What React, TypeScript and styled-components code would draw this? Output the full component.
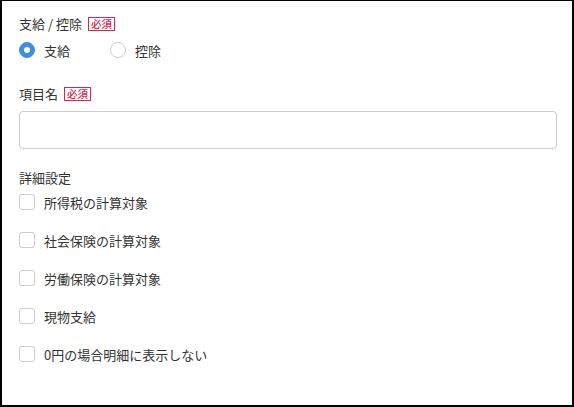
import styled, {createGlobalStyle} from "styled-components";

const GlobalStyle = createGlobalStyle`
  html, body {
    margin: 0;
    padding: 0;
    background: #ffffff;
  }

  body {
    font-family: "Noto Sans CJK JP", "Noto Sans", sans-serif;
    color: #333333;
  }
`;

const Panel = styled.div`
  background: #ffffff;
  border: solid 1px #000000;
  border-bottom-width: 2px;
  border-left-width: 2px;
  border-right-width: 2px;
  box-sizing: border-box;
  display: flex;
  flex-direction: column;
  height: 407px;
  padding: 13px 16px 0 17px;
  width: 574px;
`;

const Field = styled.div<{ $gap: number; $inner: number; }>`
  display: flex;
  flex-direction: column;
  gap: ${props => props.$inner}px;
  margin-bottom: ${props => props.$gap}px;
`;

const Label = styled.div`
  align-items: center;
  display: flex;
  font-size: 13px;
  gap: 6px;
  height: 20px;
  line-height: 20px;
`;

const Required = styled.span`
  border: solid 1px #e0234e;
  box-sizing: border-box;
  color: #e0234e;
  font-size: 10.5px;
  font-weight: 500;
  height: 14px;
  line-height: 12px;
  padding: 0 2px;
`;

const RadioRow = styled.div`
  align-items: center;
  display: flex;
  gap: 40px;
  height: 20px;
`;

const Option = styled.label`
  align-items: center;
  display: flex;
  font-size: 13px;
  gap: 9px;
`;

const Radio = styled.span<{ $checked?: boolean; }>`
  background: ${props => props.$checked ? "#3b8fde" : "#ffffff"};
  border: solid 1px ${props => props.$checked ? "#3b8fde" : "#cccccc"};
  border-radius: 50%;
  box-sizing: border-box;
  display: inline-flex;
  align-items: center;
  justify-content: center;
  height: 16px;
  width: 16px;

  &::after {
    background: #ffffff;
    border-radius: 50%;
    content: "";
    display: ${props => props.$checked ? "block" : "none"};
    height: 6px;
    width: 6px;
  }
`;

const TextInput = styled.input`
  border: solid 1px #cccccc;
  border-radius: 4px;
  box-sizing: border-box;
  font-family: inherit;
  font-size: 13px;
  height: 38px;
  margin-top: 2px;
  outline: none;
  padding: 0 10px;
  width: 538px;
`;

const CheckList = styled.div`
  display: flex;
  flex-direction: column;
  gap: 18px;
`;

const CheckRow = styled.label`
  align-items: center;
  display: flex;
  font-size: 13px;
  gap: 9px;
  height: 20px;
`;

const Box = styled.span`
  border: solid 1px #cccccc;
  border-radius: 3px;
  box-sizing: border-box;
  height: 16px;
  width: 16px;
`;

const details = [
  "所得税の計算対象",
  "社会保険の計算対象",
  "労働保険の計算対象",
  "現物支給",
  "0円の場合明細に表示しない",
];

export default function App() {
  return (<>
    <GlobalStyle />
    <Panel>
      <Field $gap={24} $inner={6}>
        <Label>支給 / 控除<Required>必須</Required></Label>
        <RadioRow>
          <Option><Radio $checked />支給</Option>
          <Option><Radio />控除</Option>
        </RadioRow>
      </Field>
      <Field $gap={19} $inner={5}>
        <Label>項目名<Required>必須</Required></Label>
        <TextInput type="text" />
      </Field>
      <Field $gap={0} $inner={4}>
        <Label>詳細設定</Label>
        <CheckList>
          {details.map(item => (
            <CheckRow key={item}><Box />{item}</CheckRow>
          ))}
        </CheckList>
      </Field>
    </Panel>
  </>);
}
